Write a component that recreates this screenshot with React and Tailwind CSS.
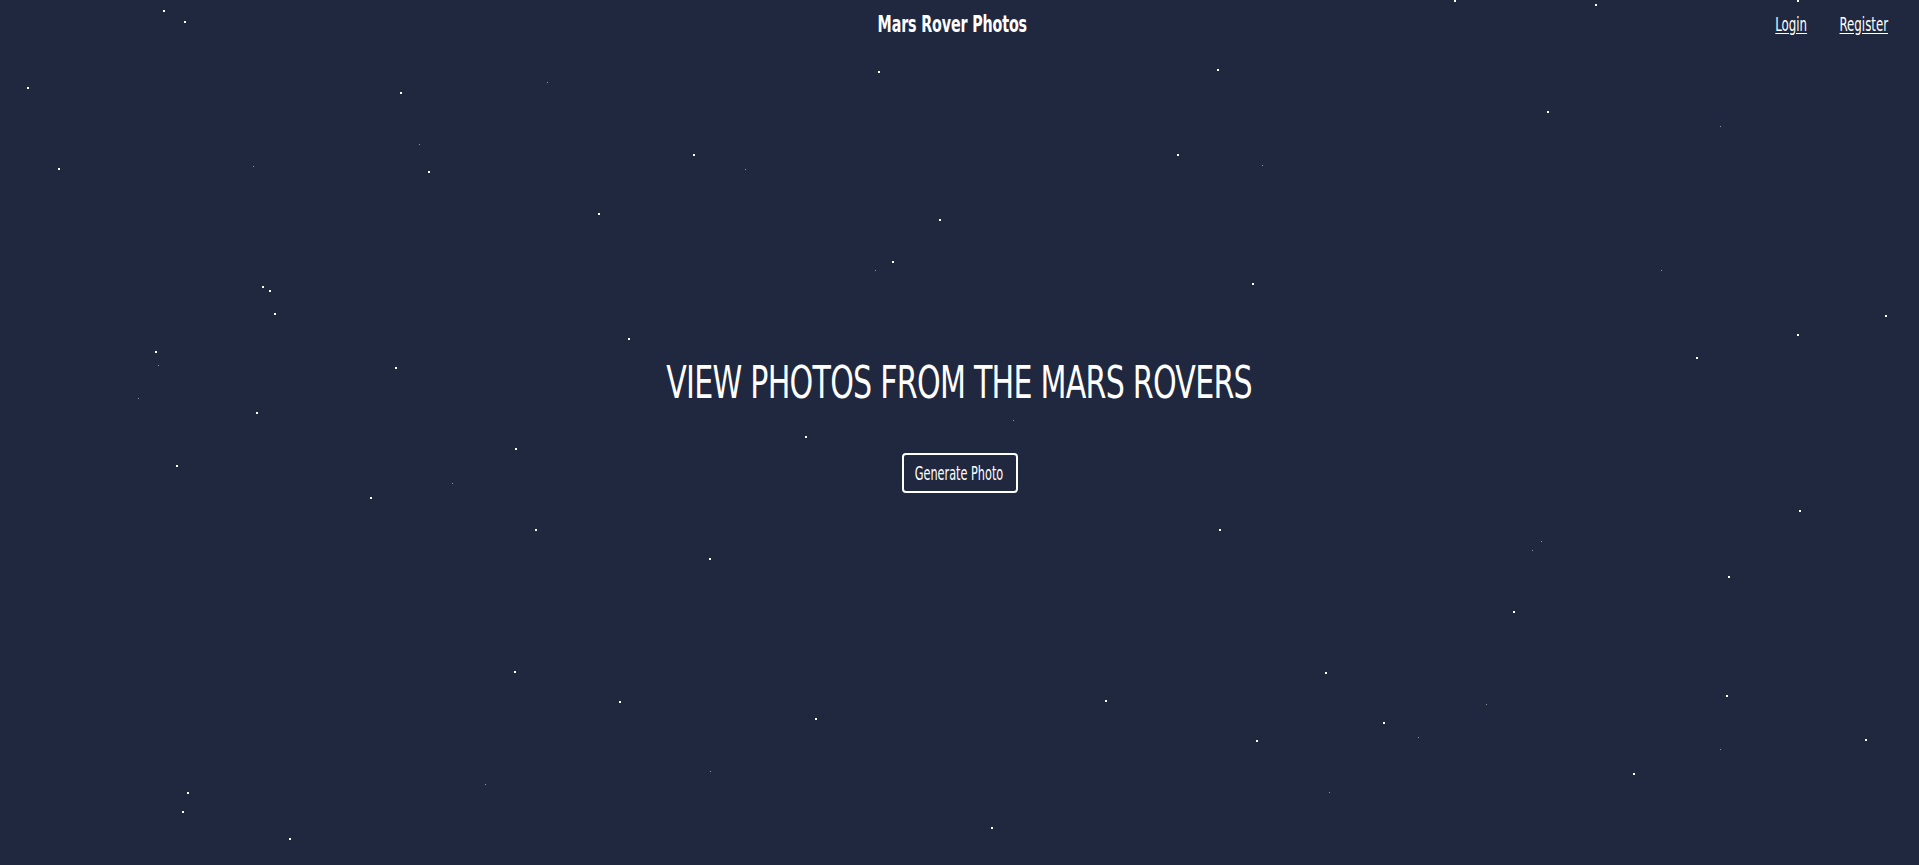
import React from "react";

// star positions, measured on a 1568 wide copy of the page
const STARS = [
  [133, 8], [150, 17], [22, 71], [327, 75], [447, 67, 1], [47, 137], [342, 118, 1], [350, 140],
  [207, 136, 1], [566, 126], [609, 138, 1], [717, 58], [994, 56], [1264, 91], [1405, 103, 1],
  [962, 126], [1031, 135, 1], [489, 174], [767, 179], [729, 213], [715, 221, 1], [214, 234],
  [220, 237], [224, 256], [1023, 231], [1357, 221, 1], [1540, 257], [1468, 273], [513, 276],
  [127, 287], [129, 298, 1], [323, 300], [113, 325, 1], [1386, 292], [209, 337], [658, 356],
  [828, 343, 1], [421, 366], [144, 380], [369, 395, 1], [302, 406], [437, 432], [996, 432],
  [1470, 417], [579, 456], [1259, 442, 1], [1252, 449, 1], [1412, 471], [1236, 499], [420, 548],
  [1083, 549], [506, 573], [903, 572], [1214, 575, 1], [1410, 568], [666, 587], [1130, 590],
  [1026, 605], [1159, 602, 1], [1524, 604], [1405, 612, 1], [580, 630, 1], [1334, 632],
  [396, 641, 1], [153, 647], [149, 663], [1086, 647, 1], [236, 685], [810, 676], [1188, 0],
  [1303, 3], [1468, 0],
];

const RATIO = 1919 / 1568;

const Stars = () => (
  <div className="absolute inset-0 pointer-events-none">
    {STARS.map(([x, y, faint], i) => (
      <span
        key={i}
        className={faint ? "absolute w-px h-px bg-white/50" : "absolute w-[2px] h-[2px] bg-white"}
        style={{ left: Math.round(x * RATIO), top: Math.round(y * RATIO) }}
      />
    ))}
  </div>
);

export default function App() {
  return (
    <div className="relative w-full h-[865px] overflow-hidden bg-[#20283f] text-white font-['DejaVu_Sans_Condensed','Liberation_Sans',sans-serif]">
      <Stars />

      {/* Top bar */}
      <header className="relative grid grid-cols-3 items-center h-[48px] px-[31px]">
        <div />
        <div className="flex justify-center -ml-[15px]">
          <h1 className="font-bold text-[23px] tracking-[-0.2px] whitespace-nowrap scale-x-[0.69]">Mars Rover Photos</h1>
        </div>
        <nav className="flex justify-end gap-[47px] text-[19px] scale-x-[0.69] origin-right">
          <a href="#" className="underline underline-offset-2">Login</a>
          <a href="#" className="underline underline-offset-2">Register</a>
        </nav>
      </header>

      {/* Hero */}
      <main className="relative flex flex-col items-center pt-[312px]">
        <h2 className="text-[45px] leading-none tracking-[-1px] whitespace-nowrap scale-x-[0.743]">
          VIEW PHOTOS FROM THE MARS ROVERS
        </h2>
        <button className="mt-[48px] flex items-center justify-center w-[116px] h-[40px] border-2 border-white rounded-[4px]">
          <span className="text-[19px] whitespace-nowrap scale-x-[0.66]">Generate Photo</span>
        </button>
      </main>
    </div>
  );
}
